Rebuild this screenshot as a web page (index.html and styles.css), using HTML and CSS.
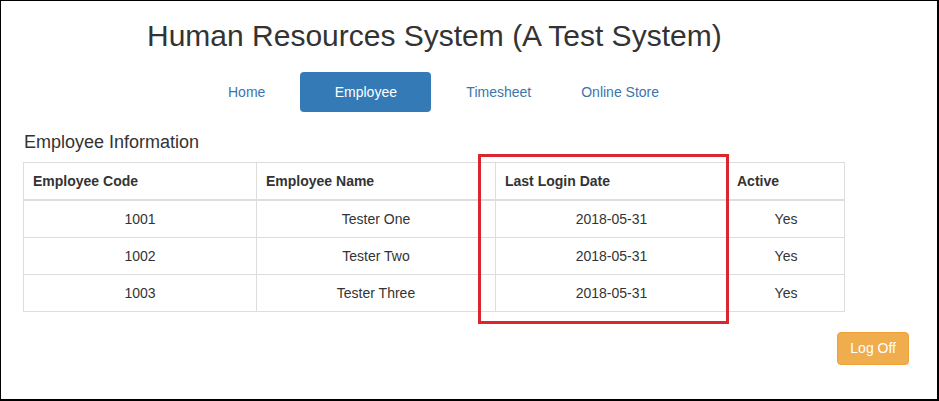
FILE: index.html
```html
<!DOCTYPE html>
<html>
<head>
<meta charset="utf-8">
<title>Human Resources System</title>
<link rel="stylesheet" href="styles.css">
</head>
<body>
<div class="page">
  <h2 class="title">Human Resources System (A Test System)</h2>
  <ul class="nav">
    <li><a class="pill" href="#">Home</a></li>
    <li><a class="pill active" href="#">Employee</a></li>
    <li><a class="pill" href="#">Timesheet</a></li>
    <li><a class="pill last" href="#">Online Store</a></li>
  </ul>
  <div class="content">
    <h4 class="section-title">Employee Information</h4>
    <div class="table-wrap">
      <table class="grid">
        <colgroup>
          <col class="c1"><col class="c2"><col class="c3"><col class="c4">
        </colgroup>
        <thead>
          <tr><th>Employee Code</th><th>Employee Name</th><th>Last Login Date</th><th>Active</th></tr>
        </thead>
        <tbody>
          <tr><td>1001</td><td>Tester One</td><td>2018-05-31</td><td>Yes</td></tr>
          <tr><td>1002</td><td>Tester Two</td><td>2018-05-31</td><td>Yes</td></tr>
          <tr><td>1003</td><td>Tester Three</td><td>2018-05-31</td><td>Yes</td></tr>
        </tbody>
      </table>
      <div class="highlight"></div>
    </div>
  </div>
  <div class="footer">
    <button class="btn-logoff">Log Off</button>
  </div>
</div>
</body>
</html>
```

FILE: styles.css
```css
* { box-sizing: border-box; }
html, body { margin: 0; padding: 0; background: #fff; }
body {
  font-family: "Liberation Sans", Arial, sans-serif;
  font-size: 14px;
  line-height: 20px;
  color: #333;
}
.page {
  width: 939px;
  height: 401px;
  border-top: 1px solid #000;
  border-left: 1px solid #000;
  border-right: 2px solid #000;
  border-bottom: 2px solid #000;
  overflow: hidden;
}
.title {
  margin: 18px 0 0 146px;
  font-size: 30px;
  font-weight: 400;
  line-height: 33px;
  color: #333;
}
.nav {
  list-style: none;
  margin: 20px 0 0 0;
  padding: 0 0 0 192px;
  display: flex;
}
.pill {
  display: block;
  padding: 10px 35px;
  line-height: 20px;
  border-radius: 4px;
  color: #3a76ad;
  text-decoration: none;
}
.pill.last { padding-left: 15px; }
.pill.active {
  width: 131px;
  padding: 10px 0;
  text-align: center;
  background: #337ab7;
  color: #fff;
}
.content { padding-left: 22px; }
.section-title {
  margin: 20px 0 10px 1px;
  font-size: 18px;
  font-weight: 400;
  line-height: 20px;
  color: #333;
}
.table-wrap { position: relative; width: 821px; }
.grid {
  border-collapse: collapse;
  table-layout: fixed;
  width: 821px;
  border: 1px solid #ddd;
}
.c1 { width: 233px; }
.c2 { width: 239px; }
.c3 { width: 232px; }
.c4 { width: 117px; }
.grid th, .grid td {
  border: 1px solid #ddd;
  padding: 8px;
  line-height: 20px;
}
.grid th {
  text-align: left;
  font-weight: 700;
  border-bottom: 2px solid #ddd;
  padding-left: 9px;
}
.grid td { text-align: center; }
.highlight {
  position: absolute;
  left: 455px;
  top: -8px;
  width: 251px;
  height: 170px;
  border: 3px solid #d9262f;
}
.footer {
  display: flex;
  justify-content: flex-end;
  margin-top: 20px;
  padding-right: 28px;
}
.btn-logoff {
  font-family: "Liberation Sans", Arial, sans-serif;
  font-size: 14px;
  line-height: 19px;
  padding: 6px 12px;
  color: #fff;
  background: #f0ad4e;
  border: 1px solid #eea236;
  border-radius: 4px;
}
```
